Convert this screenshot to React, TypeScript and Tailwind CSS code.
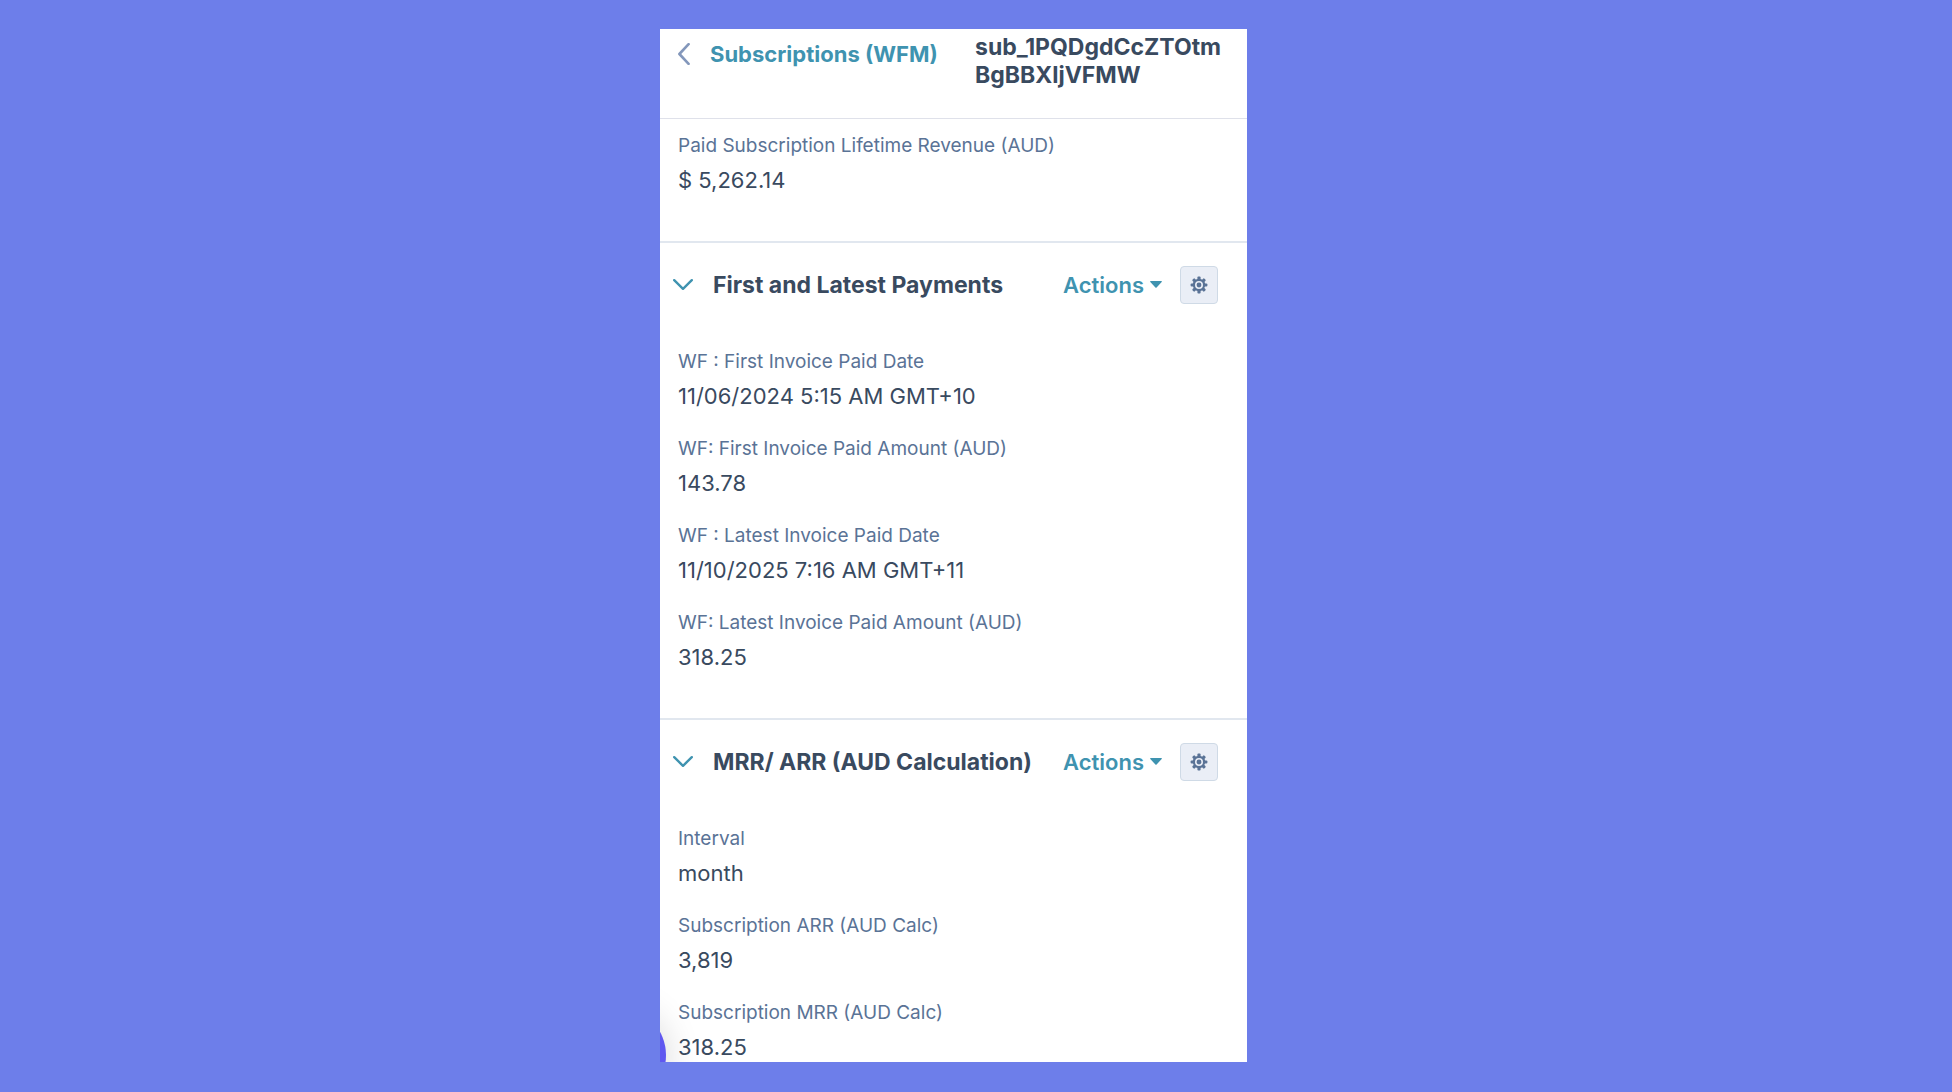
type Field = { label: string; value: string };

const revenue: Field[] = [
  { label: 'Paid Subscription Lifetime Revenue (AUD)', value: '$ 5,262.14' },
];

const payments: Field[] = [
  { label: 'WF : First Invoice Paid Date', value: '11/06/2024 5:15 AM GMT+10' },
  { label: 'WF: First Invoice Paid Amount (AUD)', value: '143.78' },
  { label: 'WF : Latest Invoice Paid Date', value: '11/10/2025 7:16 AM GMT+11' },
  { label: 'WF: Latest Invoice Paid Amount (AUD)', value: '318.25' },
];

const recurring: Field[] = [
  { label: 'Interval', value: 'month' },
  { label: 'Subscription ARR (AUD Calc)', value: '3,819' },
  { label: 'Subscription MRR (AUD Calc)', value: '318.25' },
];

const teeth = [0, 45, 90, 135, 180, 225, 270, 315];

function GearIcon() {
  return (
    <svg viewBox="0 0 18 18" className="size-[18px]" aria-hidden="true">
      <circle cx="9" cy="9" r="5.1" fill="none" stroke="currentColor" strokeWidth="2.2" />
      <circle cx="9" cy="9" r="2.4" fill="currentColor" />
      {teeth.map((angle) => (
        <rect key={angle} x="7.4" y="0.6" width="3.2" height="3.4" rx="1" fill="currentColor" transform={`rotate(${angle} 9 9)`} />
      ))}
    </svg>
  );
}

function FieldList({ fields }: { fields: Field[] }) {
  return (
    <dl className="flex flex-col gap-[23px] px-[18px] pb-[45px]">
      {fields.map((field) => (
        <div key={field.label}>
          <dt className="text-[19px] leading-7 text-[#5a7396]">{field.label}</dt>
          <dd className="mt-1 text-[22px] leading-8 text-[#394a5f]">{field.value}</dd>
        </div>
      ))}
    </dl>
  );
}

function Section({ title, fields }: { title: string; fields: Field[] }) {
  return (
    <section className="border-t-2 border-[#e1e7ef]">
      <div className="mb-[22px] flex h-[83px] items-center pr-[29px] pl-[13px]">
        <button type="button" className="flex items-center gap-5 whitespace-nowrap">
          <svg viewBox="0 0 20 12" className="h-3 w-5" fill="none" stroke="#3f93b0" strokeWidth="2.4" strokeLinecap="round" strokeLinejoin="round" aria-hidden="true">
            <path d="M1.2 1.2 10 9.8 18.8 1.2" />
          </svg>
          <h2 className="text-[23px] leading-7 font-bold text-[#394a5f]">{title}</h2>
        </button>
        <button type="button" className="ml-auto flex items-center gap-1.5 text-[22px] leading-7 font-semibold text-[#3f93b0]">
          Actions
          <svg viewBox="0 0 12 7" className="h-[7px] w-3" fill="currentColor" aria-hidden="true">
            <path d="M.8 0h10.4a.6.6 0 0 1 .5 1L6.6 6.5a.8.8 0 0 1-1.2 0L.3 1A.6.6 0 0 1 .8 0Z" />
          </svg>
        </button>
        <button type="button" aria-label="Settings" className="ml-[18px] flex size-[38px] items-center justify-center rounded-[4px] border border-[#cfdae6] bg-[#eaeef6] text-[#5a7396]">
          <GearIcon />
        </button>
      </div>
      <FieldList fields={fields} />
    </section>
  );
}

export default function App() {
  return (
    <div className="grid h-screen grid-cols-[660fr_587fr_705fr] bg-[#6d7eea] pt-[29px] pb-[30px] font-['Inter',sans-serif]">
      <main className="relative col-start-2 min-w-0 overflow-hidden bg-white">
        <header className="flex h-[89px] items-start pl-[18px]">
          <a href="#subscriptions" className="flex w-[297px] items-center gap-5 pt-[11px] text-[22px] leading-7 font-bold whitespace-nowrap text-[#3f93b0]">
            <svg viewBox="0 0 12 22" className="h-[22px] w-3 shrink-0" fill="none" stroke="#8397bb" strokeWidth="2.6" strokeLinecap="round" strokeLinejoin="round" aria-hidden="true">
              <path d="M10.6 1.2 1.4 11l9.2 9.8" />
            </svg>
            Subscriptions (WFM)
          </a>
          <h1 className="pt-1 text-[23px] leading-7 font-bold text-[#394a5f]">
            sub_1PQDgdCcZTOtm
            <br />
            BgBBXljVFMW
          </h1>
        </header>

        <section className="border-t border-[#dfe1ea] pt-[13px]">
          <FieldList fields={revenue} />
        </section>
        <Section title="First and Latest Payments" fields={payments} />
        <Section title="MRR/ ARR (AUD Calculation)" fields={recurring} />

        {/* Chat launcher, mostly off the left edge */}
        <div className="absolute -bottom-[41px] -left-[90px] size-24 rounded-full bg-[#6058f0] shadow-[0_2px_36px_rgba(0,0,0,0.16)]" />
      </main>
    </div>
  );
}
